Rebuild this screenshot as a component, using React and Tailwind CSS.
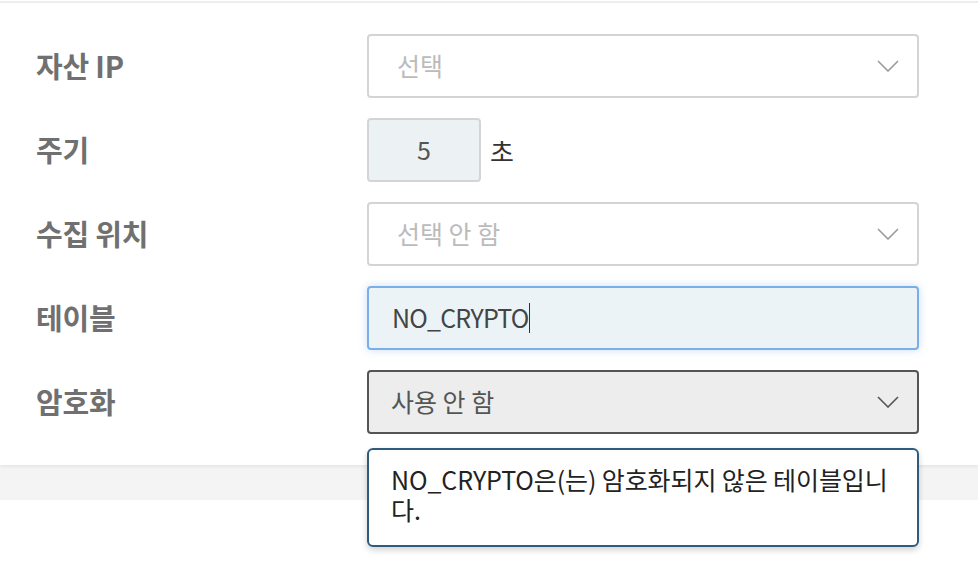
import React from 'react'

const font = { fontFamily: '"Noto Sans CJK KR", "Noto Sans", sans-serif' }

function Chevron({ dark }) {
  return (
    <svg width="22" height="12" viewBox="0 0 22 12" fill="none" className="shrink-0">
      <path d="M1 1 L11 11 L21 1" stroke={dark ? '#555555' : '#9a9a9a'} strokeWidth="1.6" />
    </svg>
  )
}

function Row({ label, children }) {
  return (
    <div className="flex items-center h-[64px]">
      <div className="w-[367px] pl-[36px] text-[29px] font-bold text-[#707070] tracking-[-0.2px]">{label}</div>
      {children}
    </div>
  )
}

function Select({ value, placeholder, dark }) {
  return (
    <div
      className={
        dark
          ? 'w-[552px] h-[64px] flex items-center justify-between pl-[22px] pr-[18px] rounded-[4px] border-2 border-[#555555] bg-[#ededed]'
          : 'w-[552px] h-[64px] flex items-center justify-between pl-[28px] pr-[18px] rounded-[4px] border-2 border-[#d4d4d4] bg-white'
      }
    >
      <span className={value ? 'text-[25px] text-[#555555]' : 'text-[25px] text-[#bbbbbb]'}>
        {value || placeholder}
      </span>
      <Chevron dark={dark} />
    </div>
  )
}

export default function App() {
  return (
    <div className="w-[978px] h-[584px] bg-white relative overflow-hidden" style={font}>
      <div className="h-[3px] border-t-2 border-[#eeeeee] mt-[1px]" />
      <div className="flex flex-col gap-[20px] pt-[30px] pb-[31px] bg-white relative z-10 shadow-[0_2px_3px_rgba(0,0,0,0.06)]">
        <Row label="자산 IP">
          <Select placeholder="선택" />
        </Row>
        <Row label="주기">
          <div className="w-[114px] h-[64px] flex items-center justify-center rounded-[4px] border-2 border-[#d4d4d4] bg-[#ecf2f4] text-[25px] text-[#555555]">
            5
          </div>
          <span className="ml-[9px] text-[26px] text-[#333333]">초</span>
        </Row>
        <Row label="수집 위치">
          <Select placeholder="선택 안 함" />
        </Row>
        <Row label="테이블">
          <div className="w-[552px] h-[64px] flex items-center pl-[23px] rounded-[4px] border-2 border-[#7aaee8] bg-[#ebf3f6] shadow-[0_0_8px_rgba(110,160,230,0.35)]">
            <span className="text-[25px] text-[#444444] tracking-[-0.8px]">NO_CRYPTO</span>
            <span className="w-[1.5px] h-[30px] bg-[#333333]" />
          </div>
        </Row>
        <Row label="암호화">
          <Select value="사용 안 함" dark />
        </Row>
      </div>
      <div className="h-[35px] bg-[#f4f4f4]" />

      <div className="absolute left-[367px] top-[448px] w-[552px] h-[99px] rounded-[6px] border-2 border-[#2f5b7c] bg-white shadow-[0_3px_6px_rgba(0,0,0,0.18)] pl-[22px] pr-[24px] pt-[14px] z-20">
        <p className="text-[25px] leading-[30px] text-[#222222] tracking-[-0.1px] break-all">
          NO_CRYPTO은(는) 암호화되지 않은 테이블입니다.
        </p>
      </div>
    </div>
  )
}
